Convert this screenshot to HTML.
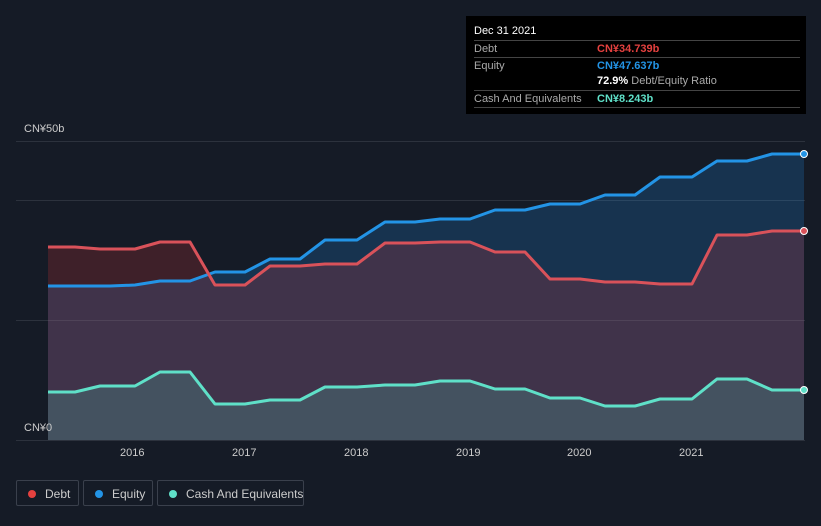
<!DOCTYPE html>
<html><head><meta charset="utf-8"><style>
body{margin:0;width:821px;height:526px;background:#151b26;font-family:"Liberation Sans",sans-serif;overflow:hidden;position:relative}
.tt{position:absolute;left:466px;top:16px;width:340px;height:98px;background:#000;color:#fff;font-size:11px}
.tt .r{position:absolute;left:8px;width:326px;border-top:1px solid #444;height:16px}
.lg{position:absolute;top:480px;height:26px;border:1px solid #3a404c;border-radius:2px;color:#ccc;font-size:12px;line-height:26px;box-sizing:border-box;white-space:nowrap}
.lg i{position:absolute;left:11px;top:9px;width:8px;height:8px;border-radius:50%}
.lg span{position:absolute;left:28px;white-space:nowrap}
.ax{position:absolute;color:#ccc;font-size:11px}
</style></head><body>
<svg width="821" height="526" style="position:absolute;left:0;top:0">
<g stroke="#2c323d" stroke-width="1"><line x1="16" y1="141.5" x2="805" y2="141.5"/><line x1="16" y1="200.5" x2="805" y2="200.5"/><line x1="16" y1="320.5" x2="805" y2="320.5"/><line x1="16" y1="440.5" x2="805" y2="440.5"/></g>
<polygon fill="rgba(33,150,243,0.2)" points="48,440 48,286 110,286 135,285 160,281 190,281 215,272 245,272 270,259 300,259 325,240 357,240 385,222 415,222 440,219 470,219 495,210 525,210 550,204 580,204 605,195 635,195 660,177 692,177 717,161 747,161 772,154 804,154 804,440"/>
<polygon fill="rgba(229,57,53,0.2)" points="48,440 48,247 75,247 100,249 135,249 160,242 190,242 215,285 245,285 270,266 300,266 325,264 357,264 385,243 415,243 440,242 470,242 495,252 525,252 550,279 580,279 605,282 635,282 660,284 692,284 717,235 747,235 772,231 804,231 804,440"/>
<polygon fill="rgba(88,229,200,0.18)" points="48,440 48,392 75,392 100,386 135,386 160,372 190,372 215,404 245,404 270,400 300,400 325,387 357,387 385,385 415,385 440,381 470,381 495,389 525,389 550,398 580,398 605,406 635,406 660,399 692,399 717,379 747,379 772,390 804,390 804,440"/>
<g fill="none" stroke-width="3" stroke-linejoin="round">
<polyline stroke="#2394e6" points="48,286 110,286 135,285 160,281 190,281 215,272 245,272 270,259 300,259 325,240 357,240 385,222 415,222 440,219 470,219 495,210 525,210 550,204 580,204 605,195 635,195 660,177 692,177 717,161 747,161 772,154 804,154"/>
<polyline stroke="#d9525a" points="48,247 75,247 100,249 135,249 160,242 190,242 215,285 245,285 270,266 300,266 325,264 357,264 385,243 415,243 440,242 470,242 495,252 525,252 550,279 580,279 605,282 635,282 660,284 692,284 717,235 747,235 772,231 804,231"/>
<polyline stroke="#5fe0c8" points="48,392 75,392 100,386 135,386 160,372 190,372 215,404 245,404 270,400 300,400 325,387 357,387 385,385 415,385 440,381 470,381 495,389 525,389 550,398 580,398 605,406 635,406 660,399 692,399 717,379 747,379 772,390 804,390"/>
</g>
<circle cx="804" cy="154" r="3.5" fill="#2394e6" stroke="#fff" stroke-width="1"/>
<circle cx="804" cy="231" r="3.5" fill="#d9525a" stroke="#fff" stroke-width="1"/>
<circle cx="804" cy="390" r="3.5" fill="#5fe0c8" stroke="#fff" stroke-width="1"/>
</svg>
<div class="ax" style="left:24px;top:123px">CN¥50b</div>
<div class="ax" style="left:24px;top:422px">CN¥0</div>
<div class="ax" style="left:120px;top:447px">2016</div>
<div class="ax" style="left:232px;top:447px">2017</div>
<div class="ax" style="left:344px;top:447px">2018</div>
<div class="ax" style="left:456px;top:447px">2019</div>
<div class="ax" style="left:567px;top:447px">2020</div>
<div class="ax" style="left:679px;top:447px">2021</div>
<div class="tt">
<div style="position:absolute;left:8px;top:9px">Dec 31 2021</div>
<div class="r" style="top:24px"><span style="color:#aaa;position:absolute;top:2px">Debt</span><span style="color:#e5413f;position:absolute;left:123px;top:2px;font-weight:bold">CN¥34.739b</span></div>
<div class="r" style="top:41px"><span style="color:#aaa;position:absolute;top:2px">Equity</span><span style="color:#2394e6;position:absolute;left:123px;top:2px;font-weight:bold">CN¥47.637b</span></div>
<div style="position:absolute;left:131px;top:59px"><b>72.9%</b> <span style="color:#aaa">Debt/Equity Ratio</span></div>
<div class="r" style="top:74px;border-bottom:1px solid #444"><span style="color:#aaa;position:absolute;top:2px">Cash And Equivalents</span><span style="color:#5fe0c8;position:absolute;left:123px;top:2px;font-weight:bold">CN¥8.243b</span></div>
</div>
<div class="lg" style="left:16px;width:63px"><i style="background:#e5413f"></i><span>Debt</span></div>
<div class="lg" style="left:83px;width:70px"><i style="background:#2394e6"></i><span>Equity</span></div>
<div class="lg" style="left:157px;width:147px"><i style="background:#5fe0c8"></i><span>Cash And Equivalents</span></div>
</body></html>
